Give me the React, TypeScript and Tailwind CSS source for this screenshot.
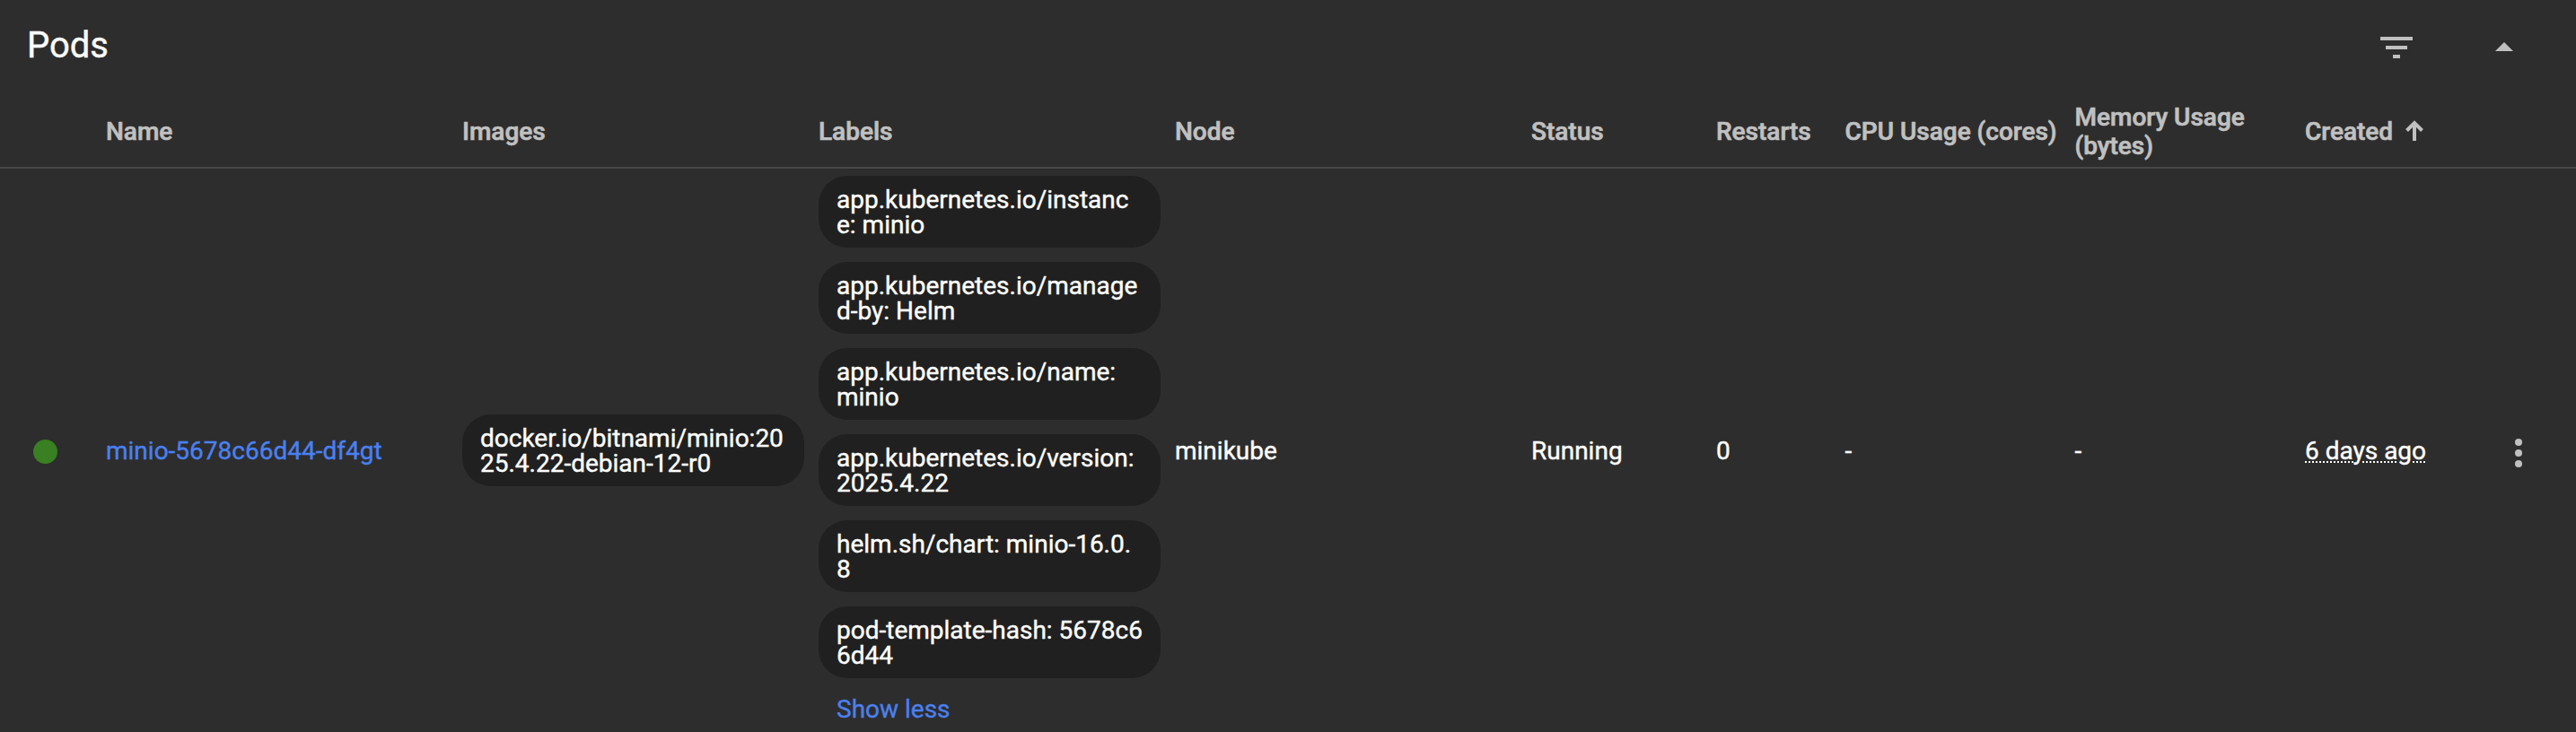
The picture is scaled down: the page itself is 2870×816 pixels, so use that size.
import React from "react";

const columns = "grid grid-cols-[118px_397px_397px_397px_397px_206px_143.5px_256px_256.5px_1fr_127.5px] items-center";

const labels = [
  "app.kubernetes.io/instance: minio",
  "app.kubernetes.io/managed-by: Helm",
  "app.kubernetes.io/name: minio",
  "app.kubernetes.io/version: 2025.4.22",
  "helm.sh/chart: minio-16.0.8",
  "pod-template-hash: 5678c66d44",
];

function Chip({ children }: { children: React.ReactNode }) {
  return (
    <div className="mr-4 h-20 rounded-[32px] bg-[#202020] px-5 pt-[13px] leading-[28px] break-all">
      {children}
    </div>
  );
}

export default function App() {
  return (
    <main className="flex h-[816px] w-full flex-col overflow-hidden bg-[#2d2d2d] font-['Roboto','Liberation_Sans',sans-serif] text-[28px] leading-8 text-white [-webkit-text-stroke:0.4px_currentColor]">
      <header className="flex h-[104px] items-center justify-between pt-0.5 pl-[30px]">
        <h2 className="pb-1 text-[40px] leading-[48px]">Pods</h2>
        <div className="flex items-center gap-[72px] pr-[56px] text-[#c0c0c0]">
          <svg viewBox="0 0 24 24" className="size-12 fill-current" aria-hidden="true">
            <path d="M10 18h4v-2h-4v2zM3 6v2h18V6H3zm3 7h12v-2H6v2z" />
          </svg>
          <svg viewBox="0 0 24 24" className="size-12 fill-current" aria-hidden="true">
            <path d="M7 14l5-5 5 5z" />
          </svg>
        </div>
      </header>
      <div className={`${columns} h-[84px] border-b-2 border-[#484848] pt-[3px] font-medium text-[#c0c0c0] [-webkit-text-stroke:0.7px_currentColor]`}>
        <span />
        <span>Name</span>
        <span>Images</span>
        <span>Labels</span>
        <span>Node</span>
        <span>Status</span>
        <span>Restarts</span>
        <span className="whitespace-nowrap">CPU Usage (cores)</span>
        <span className="pr-10">Memory Usage (bytes)</span>
        <span className="flex items-center gap-[14px]">
          Created
          <svg viewBox="0 0 20 23" className="mb-[3px] h-[23px] w-5 fill-none stroke-current" strokeWidth="4" aria-hidden="true">
            <path d="M10 23V3M1.5 11.5L10 3l8.5 8.5" />
          </svg>
        </span>
        <span />
      </div>
      <div className={`${columns} h-[628px]`}>
        <span className="mt-0.5 ml-[36.5px] size-[27px] rounded-full bg-[#388021]" />
        <a className="pt-0.5 text-[#4a80f0]">minio-5678c66d44-df4gt</a>
        <Chip>docker.io/bitnami/minio:2025.4.22-debian-12-r0</Chip>
        <div className="flex h-full flex-col gap-4 pt-2">
          {labels.map((label) => (
            <Chip key={label}>{label}</Chip>
          ))}
          <a className="pt-px pl-5 leading-9 text-[#4a80f0]">Show less</a>
        </div>
        <span className="pt-0.5">minikube</span>
        <span className="pt-0.5">Running</span>
        <span className="pt-0.5">0</span>
        <span className="pt-0.5">-</span>
        <span className="pt-0.5">-</span>
        <span className="pt-0.5">
          <span className="underline decoration-dotted decoration-2 underline-offset-2">6 days ago</span>
        </span>
        <svg viewBox="0 0 24 24" className="mt-1.5 ml-[39.5px] size-12 fill-[#c0c0c0]" aria-hidden="true">
          <circle cx="12" cy="6" r="2" />
          <circle cx="12" cy="12" r="2" />
          <circle cx="12" cy="18" r="2" />
        </svg>
      </div>
    </main>
  );
}
